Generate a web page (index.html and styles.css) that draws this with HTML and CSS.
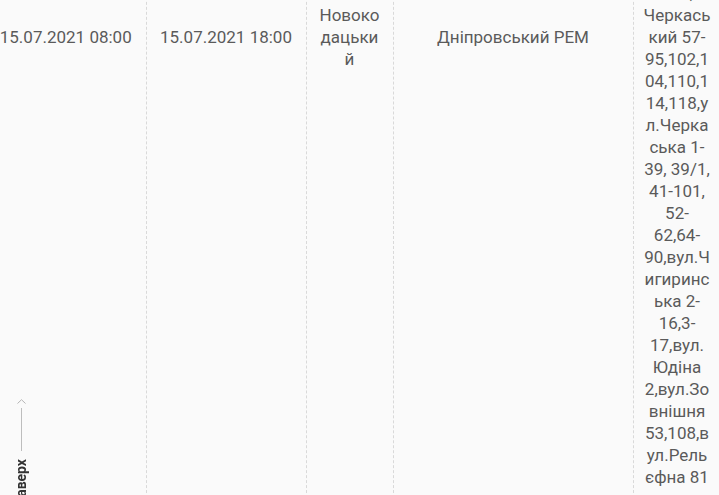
FILE: index.html
```html
<!DOCTYPE html>
<html lang="uk">
<head>
<meta charset="utf-8">
<title>Відключення</title>
<link rel="stylesheet" href="styles.css">
</head>
<body>
<table class="outages">
  <colgroup>
    <col class="w-date">
    <col class="w-date">
    <col class="w-town">
    <col class="w-rem">
    <col class="w-addr">
  </colgroup>
  <tbody>
    <tr>
      <td class="cell cell-low">15.07.2021 08:00</td>
      <td class="cell cell-low">15.07.2021 18:00</td>
      <td class="cell cell-mid cell-town">Новокодацький</td>
      <td class="cell cell-low">Дніпровський РЕМ</td>
      <td class="cell cell-top cell-addr">110, Черкаський 57-95,102,104,110,114,118,ул.Черкаська 1-39, 39/1, 41-101, 52-62,64-90,вул.Чигиринська 2-16,3-17,вул.Юдіна 2,вул.Зовнішня 53,108,вул.Рельєфна 81</td>
    </tr>
  </tbody>
</table>

<a class="to-top" href="#">
  <svg class="to-top-arrow" width="9" height="5" viewBox="0 0 9 5" aria-hidden="true"><path d="M0.5 4.5 L4.5 0.7 L8.5 4.5" fill="none" stroke="#b5b5b5" stroke-width="1"/></svg>
  <span class="to-top-line"></span>
  <span class="to-top-label">Наверх</span>
</a>
</body>
</html>
```
FILE: styles.css
```css
html, body {
  margin: 0;
  padding: 0;
  background: #fafafa;
  overflow: hidden;
  height: 100%;
}

body {
  font-family: Roboto, "Noto Sans", sans-serif;
  color: #5a5a5a;
}

.outages {
  border-collapse: collapse;
  table-layout: fixed;
  width: 735px;
  margin-left: -14px;
  margin-top: -28px;
  font-size: 17px;
  line-height: 22px;
}

.w-date { width: 160px; }
.w-town { width: 87px; }
.w-rem { width: 240px; }
.w-addr { width: 88px; }

.cell {
  vertical-align: top;
  text-align: center;
  padding: 10px 10px 20px;
  border-right: 1px dashed #d9d9d9;
  overflow-wrap: break-word;
  word-wrap: break-word;
}

.cell-top { padding-top: 10px; }
.cell-mid { padding-top: 32px; }
.cell-low { padding-top: 54px; }

.cell-town { padding-left: 12px; padding-right: 12px; }
.cell-addr { padding-left: 10px; padding-right: 10px; }

.to-top {
  position: fixed;
  left: 12px;
  bottom: -12px;
  width: 18px;
  display: flex;
  flex-direction: column;
  align-items: center;
  text-decoration: none;
}

.to-top-arrow {
  display: block;
  margin-bottom: 4px;
}

.to-top-line {
  display: block;
  width: 1px;
  height: 43px;
  background: #bdbdbd;
  margin-bottom: 8px;
}

.to-top-label {
  writing-mode: vertical-rl;
  transform: rotate(180deg);
  font-family: Roboto, "Noto Sans", sans-serif;
  font-weight: 700;
  font-size: 14px;
  line-height: 16px;
  color: #333;
}
```
